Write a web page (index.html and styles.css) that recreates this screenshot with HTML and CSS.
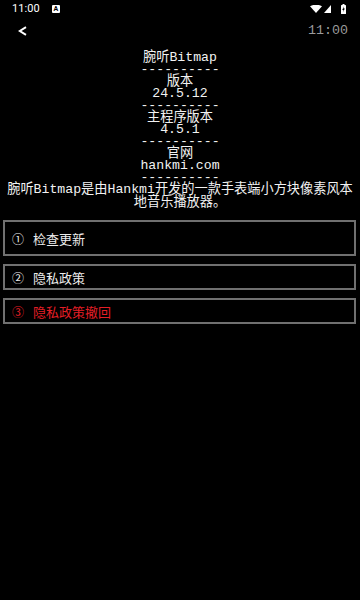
FILE: index.html
```html
<!DOCTYPE html>
<html lang="zh-CN">
<head>
<meta charset="utf-8">
<title>关于</title>
<link rel="stylesheet" href="styles.css">
</head>
<body>
<div class="screen">
  <div class="statusbar">
    <div class="sb-left">
      <span class="sb-time">11:00</span>
      <span class="sb-badge">A</span>
    </div>
    <div class="sb-right">
      <svg class="ic-wifi" width="12" height="8" viewBox="0 0 12 8"><path d="M0 1.2 Q6 -1.8 12 1.2 L6 8 Z" fill="#fff"/></svg>
      <svg class="ic-signal" width="7" height="8" viewBox="0 0 7 8"><path d="M7 0 L7 8 L0 8 Z" fill="#fff"/></svg>
      <svg class="ic-batt" width="5" height="10" viewBox="0 0 5 10"><rect x="1.5" y="0" width="2" height="1" fill="#fff"/><rect x="0" y="1" width="5" height="9" rx="0.6" fill="#fff"/><path d="M2.9 2.2 L1.3 5.9 L2.5 5.9 L2.1 8.3 L3.8 4.6 L2.6 4.6 Z" fill="#000"/></svg>
    </div>
  </div>
  <div class="toolbar">
    <svg class="back" width="10" height="10" viewBox="0 0 10 10"><polyline points="8,1.2 1.8,5 8,8.8" fill="none" stroke="#fff" stroke-width="2" stroke-linejoin="miter"/></svg>
    <span class="clock">11:00</span>
  </div>
  <div class="about">
    <div>腕听Bitmap</div>
    <div>----------</div>
    <div>版本</div>
    <div>24.5.12</div>
    <div>----------</div>
    <div>主程序版本</div>
    <div>4.5.1</div>
    <div>----------</div>
    <div>官网</div>
    <div>hankmi.com</div>
    <div>----------</div>
    <div class="desc">腕听Bitmap是由Hankmi开发的一款手表端小方块像素风本地音乐播放器。</div>
  </div>
  <div class="actions">
    <div class="btn btn-tall"><span class="num">①</span><span>检查更新</span></div>
    <div class="btn"><span class="num">②</span><span>隐私政策</span></div>
    <div class="btn btn-red"><span class="num">③</span><span>隐私政策撤回</span></div>
  </div>
</div>
</body>
</html>
```

FILE: styles.css
```css
html, body {
  margin: 0;
  padding: 0;
  background: #000;
}
.screen {
  width: 360px;
  height: 600px;
  background: #000;
  color: #fff;
  overflow: hidden;
}
.statusbar {
  height: 18px;
  display: flex;
  align-items: center;
  justify-content: space-between;
  padding: 0 12px 0 12px;
  box-sizing: border-box;
}
.sb-left {
  display: flex;
  align-items: center;
  gap: 12px;
}
.sb-time {
  font-family: Roboto, "Liberation Sans", sans-serif;
  font-size: 11px;
  color: #fff;
  line-height: 18px;
  letter-spacing: 0.1px;
}
.sb-badge {
  width: 8px;
  height: 8px;
  background: #fff;
  border-radius: 1px;
  color: #000;
  font-family: Roboto, "Liberation Sans", sans-serif;
  font-size: 7px;
  font-weight: bold;
  line-height: 8px;
  text-align: center;
}
.sb-right {
  display: flex;
  align-items: center;
  gap: 2px;
  padding-right: 2px;
}
.ic-batt { margin-left: 8px; }
.toolbar {
  height: 25px;
  display: flex;
  align-items: center;
  justify-content: space-between;
  padding: 0 12px 0 18px;
}
.back {
  display: block;
}
.clock {
  font-family: "Liberation Mono", "DejaVu Sans Mono", monospace;
  font-size: 13.33px;
  color: #9a9a9a;
  line-height: 25px;
}
.about {
  margin-top: 9px;
  padding: 0 4px;
  text-align: center;
  font-family: "Liberation Mono", "Noto Sans CJK SC", monospace;
  font-size: 13.2px;
  line-height: 12px;
  color: #f2f2f2;
}
.desc {
  line-height: 12.5px;
}
.actions {
  margin: 11px 4px 0 3px;
  display: flex;
  flex-direction: column;
  gap: 8px;
}
.btn {
  height: 26px;
  box-sizing: border-box;
  border: 2px solid #707070;
  display: flex;
  align-items: center;
  padding-left: 7px;
  font-family: "Noto Sans CJK SC", sans-serif;
  font-size: 13px;
  color: #ececec;
}
.btn-tall {
  height: 36px;
}
.btn-red {
  color: #e41e26;
}
.num {
  width: 21px;
  font-size: 12px;
}
```
